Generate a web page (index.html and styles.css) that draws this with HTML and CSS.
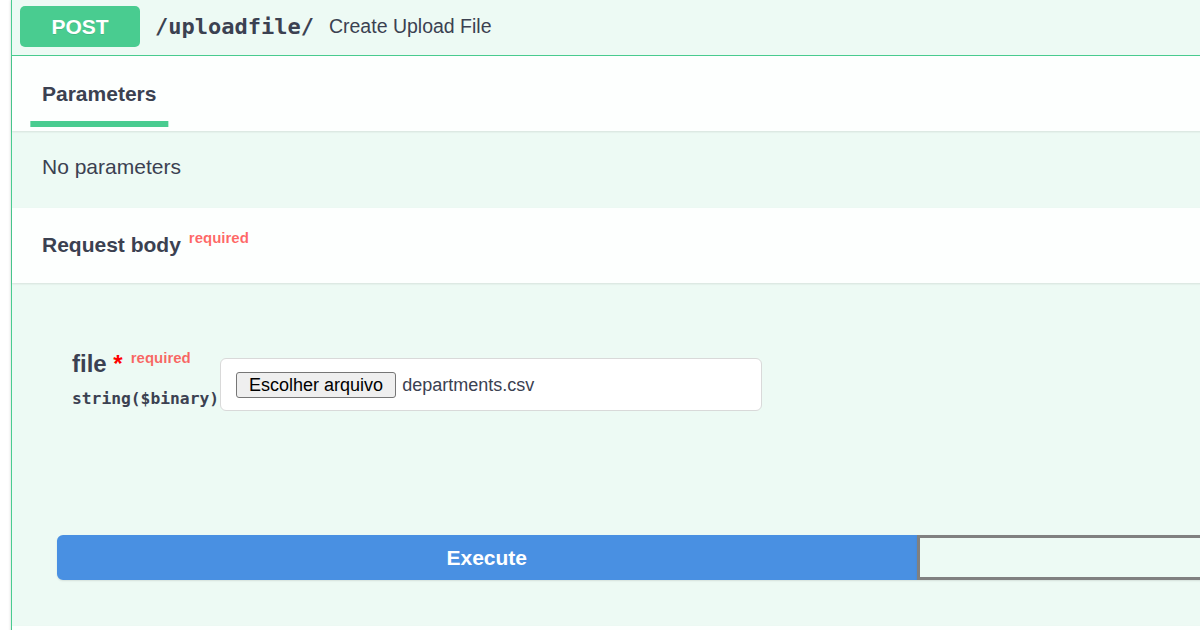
FILE: index.html
```html
<!DOCTYPE html>
<html>
<head>
<meta charset="utf-8">
<title>Create Upload File</title>
<link rel="stylesheet" href="styles.css">
</head>
<body>
<div class="opblock">
  <div class="summary">
    <span class="method">POST</span>
    <span class="path">/uploadfile/</span>
    <span class="summary-desc">Create Upload File</span>
  </div>
  <div class="section-header">
    <div class="tab active"><h4><span class="tab-label">Parameters</span></h4></div>
  </div>
  <div class="desc-wrapper"><p>No parameters</p></div>
  <div class="section-header">
    <h4 class="rb-title">Request body<span class="req">required</span></h4>
  </div>
  <div class="body">
    <div class="param-row">
      <div class="param-name-col">
        <div class="param-name">file<span class="star">&nbsp;*</span><span class="req-small">required</span></div>
        <div class="param-type">string($binary)</div>
      </div>
      <div class="file-input">
        <span class="file-btn">Escolher arquivo</span>
        <span class="file-name">departments.csv</span>
      </div>
    </div>
    <div class="btn-group">
      <button class="btn execute">Execute</button>
      <button class="btn clear"></button>
    </div>
  </div>
  <div class="section-header tail"></div>
</div>
</body>
</html>
```

FILE: styles.css
```css
html, body {
  margin: 0;
  padding: 0;
  background: #ffffff;
  overflow: hidden;
  font-family: "Liberation Sans", Arial, sans-serif;
  color: #3b4151;
}

.opblock {
  margin-left: 11px;
  width: 1809px;
  border: 1px solid #49cc90;
  border-top: 0;
  background: #edfaf4;
  box-shadow: 0 0 3px rgba(0, 0, 0, 0.19);
}

.summary {
  display: flex;
  align-items: center;
  padding: 6px 8px 8px 8px;
  border-bottom: 1px solid #49cc90;
}

.method {
  width: 120px;
  height: 41px;
  display: flex;
  align-items: center;
  justify-content: center;
  background: #49cc90;
  color: #ffffff;
  border-radius: 5px;
  font-weight: 700;
  font-size: 21px;
  text-shadow: 0 1px 0 rgba(0, 0, 0, 0.1);
}

.path {
  padding: 0 15px;
  font-family: "DejaVu Sans Mono", "Liberation Mono", monospace;
  font-weight: 700;
  font-size: 22px;
  color: #3b4151;
}

.summary-desc {
  font-size: 19.5px;
  color: #3b4151;
}

.section-header {
  box-sizing: border-box;
  height: 75px;
  display: flex;
  align-items: center;
  padding: 0 30px;
  background: rgba(255, 255, 255, 0.85);
  box-shadow: 0 1px 2px rgba(0, 0, 0, 0.1);
  position: relative;
}

.section-header h4 {
  margin: 0;
  font-size: 21px;
  font-weight: 700;
  line-height: 24px;
  color: #3b4151;
}

.tab-label {
  position: relative;
  display: inline-block;
}

.tab.active .tab-label::after {
  content: "";
  position: absolute;
  left: 50%;
  bottom: -21px;
  width: 120%;
  height: 6px;
  transform: translateX(-50%);
  background: #49cc90;
}

.desc-wrapper {
  box-sizing: border-box;
  height: 77px;
  padding: 23px 30px 0 30px;
}

.desc-wrapper p {
  margin: 0;
  font-size: 21px;
  line-height: 25px;
}

.rb-title .req {
  font-size: 15px;
  font-weight: 700;
  color: rgba(255, 0, 0, 0.6);
  padding-left: 8px;
  position: relative;
  top: -9px;
}

.body {
  padding: 67px 0 46px 45px;
}

.param-row {
  display: flex;
  align-items: flex-start;
  height: 67px;
  padding-left: 15px;
}

.param-name-col {
  display: flex;
  flex-direction: column;
}

.param-name {
  font-size: 24px;
  font-weight: 700;
  line-height: 28px;
  white-space: nowrap;
}

.param-name .star {
  color: #ff0000;
}

.req-small {
  font-size: 15px;
  color: rgba(255, 0, 0, 0.6);
  padding-left: 8px;
  position: relative;
  top: -9px;
}

.param-type {
  padding: 6px 0;
  font-family: "DejaVu Sans Mono", "Liberation Mono", monospace;
  font-weight: 700;
  font-size: 16.3px;
  line-height: 24px;
  color: #3b4151;
  white-space: nowrap;
}

.file-input {
  box-sizing: border-box;
  width: 542px;
  height: 53px;
  margin-top: 8px;
  margin-left: 1px;
  padding: 13px 15px 12px 15px;
  display: flex;
  align-items: center;
  background: #ffffff;
  border: 1px solid #d9d9d9;
  border-radius: 6px;
}

.file-btn {
  box-sizing: border-box;
  height: 26px;
  padding: 0 12px;
  display: flex;
  align-items: center;
  background: #efefef;
  border: 1px solid #767676;
  border-radius: 3px;
  font-size: 18px;
  color: #000000;
  white-space: nowrap;
}

.file-name {
  margin-left: 6px;
  font-size: 18px;
  color: #3b4151;
}

.btn-group {
  display: flex;
  margin-top: 118px;
  padding-right: 45px;
}

.btn {
  flex: 1;
  box-sizing: border-box;
  height: 45px;
  font-family: "Liberation Sans", Arial, sans-serif;
  font-size: 21px;
  font-weight: 700;
  box-shadow: 0 1px 2px rgba(0, 0, 0, 0.1);
  cursor: pointer;
}

.btn.execute {
  background: #4990e2;
  color: #ffffff;
  border: 3px solid #4990e2;
  border-radius: 6px 0 0 6px;
}

.btn.clear {
  background: transparent;
  border: 3px solid #808080;
  border-radius: 0 6px 6px 0;
}

.section-header.tail {
  height: 40px;
}
```
